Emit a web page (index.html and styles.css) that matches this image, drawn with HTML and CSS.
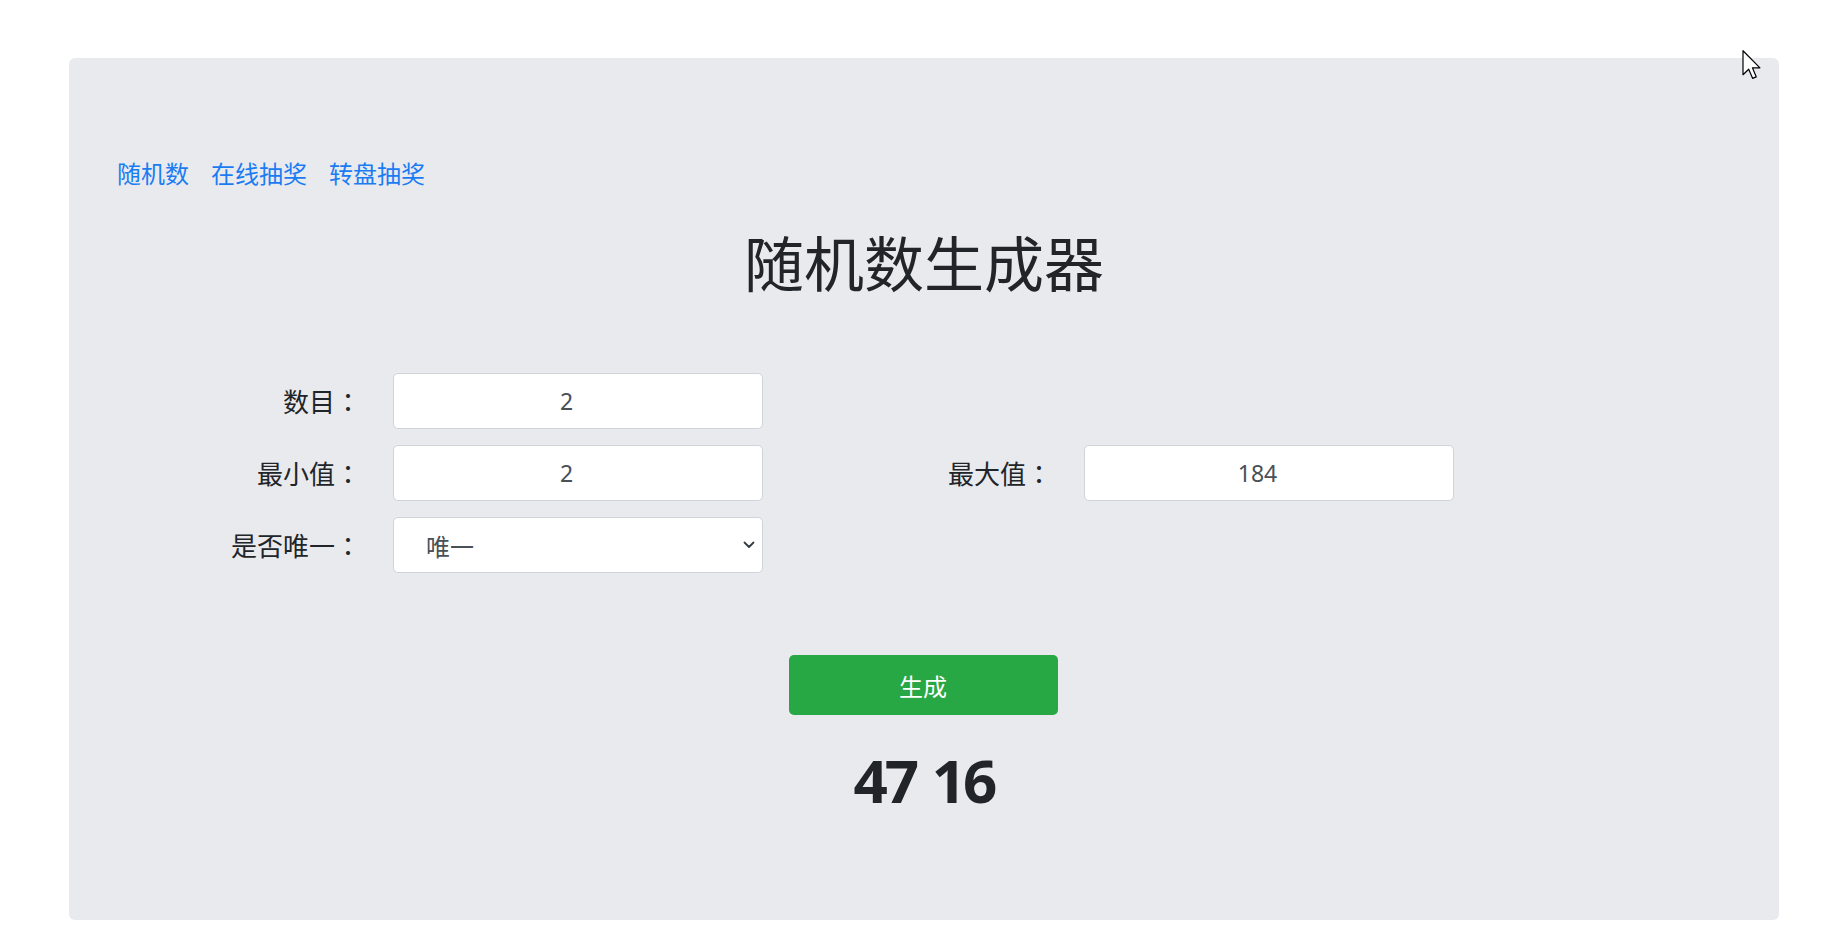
FILE: index.html
```html
<!DOCTYPE html>
<html lang="zh-CN">
<head>
<meta charset="utf-8">
<title>随机数生成器</title>
<link rel="stylesheet" href="styles.css">
</head>
<body>
<div class="card">
  <nav class="nav">
    <a href="#">随机数</a>
    <a href="#">在线抽奖</a>
    <a href="#">转盘抽奖</a>
  </nav>
  <h1 class="title">随机数生成器</h1>
  <form class="form">
    <label class="label">数目<span class="colon" lang="zh-TW">：</span></label>
    <input class="field" type="number" value="2">
    <span></span>
    <span></span>
    <label class="label">最小值<span class="colon" lang="zh-TW">：</span></label>
    <input class="field" type="number" value="2">
    <label class="label">最大值<span class="colon" lang="zh-TW">：</span></label>
    <input class="field" type="number" value="184">
    <label class="label">是否唯一<span class="colon" lang="zh-TW">：</span></label>
    <div class="select-wrap">
      <select class="select">
        <option>唯一</option>
        <option>不唯一</option>
      </select>
      <svg class="chevron" width="12" height="8" viewBox="0 0 12 8"><path d="M1.5 1.5 L6 6 L10.5 1.5" fill="none" stroke="#343a40" stroke-width="1.8" stroke-linecap="round" stroke-linejoin="round"/></svg>
    </div>
  </form>
  <div class="actions">
    <button class="btn" type="button">生成</button>
  </div>
  <div class="result">47 16</div>
</div>
<svg class="cursor" width="20" height="30" viewBox="0 0 13 20"><path d="M0.5 0.5 L0.5 16.5 L4.3 12.8 L6.9 18.9 L9.3 17.9 L6.8 11.9 L11.8 11.9 Z" fill="#fff" stroke="#000" stroke-width="0.8" stroke-linejoin="round"/></svg>
</body>
</html>
```
FILE: styles.css
```css
* { box-sizing: border-box; }

html, body {
  margin: 0;
  padding: 0;
  background: #ffffff;
}

body {
  font-family: "Noto Sans", "Noto Sans CJK SC", sans-serif;
  color: #212529;
  position: relative;
  height: 932px;
  overflow: hidden;
}

.card {
  margin: 58px 59px 0 69px;
  height: 862px;
  background: #e9eaee;
  border-radius: 6px;
  padding: 100px 48px 0 48px;
}

.nav {
  display: flex;
  gap: 22px;
  height: 30px;
  align-items: center;
}

.nav a {
  color: #1a7cf2;
  text-decoration: none;
  font-family: "Noto Sans CJK SC", sans-serif;
  font-size: 24px;
  line-height: 30px;
}

.title {
  margin: 37px 0 0 0;
  text-align: center;
  font-family: "Noto Sans CJK SC", sans-serif;
  font-weight: 400;
  font-size: 60px;
  line-height: 72px;
  color: #212529;
}

.form {
  margin-top: 76px;
  display: grid;
  grid-template-columns: 243px 370px 255px 370px;
  grid-auto-rows: 56px;
  column-gap: 33px;
  row-gap: 16px;
  align-items: center;
}

.label {
  text-align: right;
  font-family: "Noto Sans CJK SC", sans-serif;
  font-size: 26px;
  line-height: 34px;
  color: #212529;
  margin-right: -1px;
}

.colon {
  font-family: "Noto Sans CJK TC", sans-serif;
}

.field {
  width: 100%;
  height: 56px;
  border: 1px solid #ced4da;
  border-radius: 5px;
  background: #fff;
  text-align: center;
  font-family: "Noto Sans", "Noto Sans CJK SC", sans-serif;
  font-size: 23px;
  color: #495057;
  padding: 0 16px 0 8px;
  outline: none;
}

.select-wrap {
  position: relative;
  height: 56px;
}

.select {
  -webkit-appearance: none;
  appearance: none;
  width: 100%;
  height: 56px;
  border: 1px solid #ced4da;
  border-radius: 5px;
  background: #fff;
  font-family: "Noto Sans CJK SC", sans-serif;
  font-size: 24px;
  color: #495057;
  padding: 0 40px 0 32px;
  outline: none;
}

.chevron {
  position: absolute;
  right: 8px;
  top: 24px;
  pointer-events: none;
}

.actions {
  margin-top: 82px;
  display: flex;
  justify-content: center;
}

.btn {
  width: 269px;
  height: 60px;
  border: none;
  border-radius: 5px;
  background: #28a745;
  color: #fff;
  font-family: "Noto Sans CJK SC", sans-serif;
  font-size: 24px;
  cursor: pointer;
  margin-right: 2px;
}

.result {
  margin-top: 30px;
  text-align: center;
  font-family: "Noto Sans", sans-serif;
  font-weight: 700;
  font-size: 60px;
  line-height: 70px;
  letter-spacing: -3px;
  word-spacing: 3px;
  color: #212529;
}

.cursor {
  position: absolute;
  left: 1742px;
  top: 50px;
}
```
